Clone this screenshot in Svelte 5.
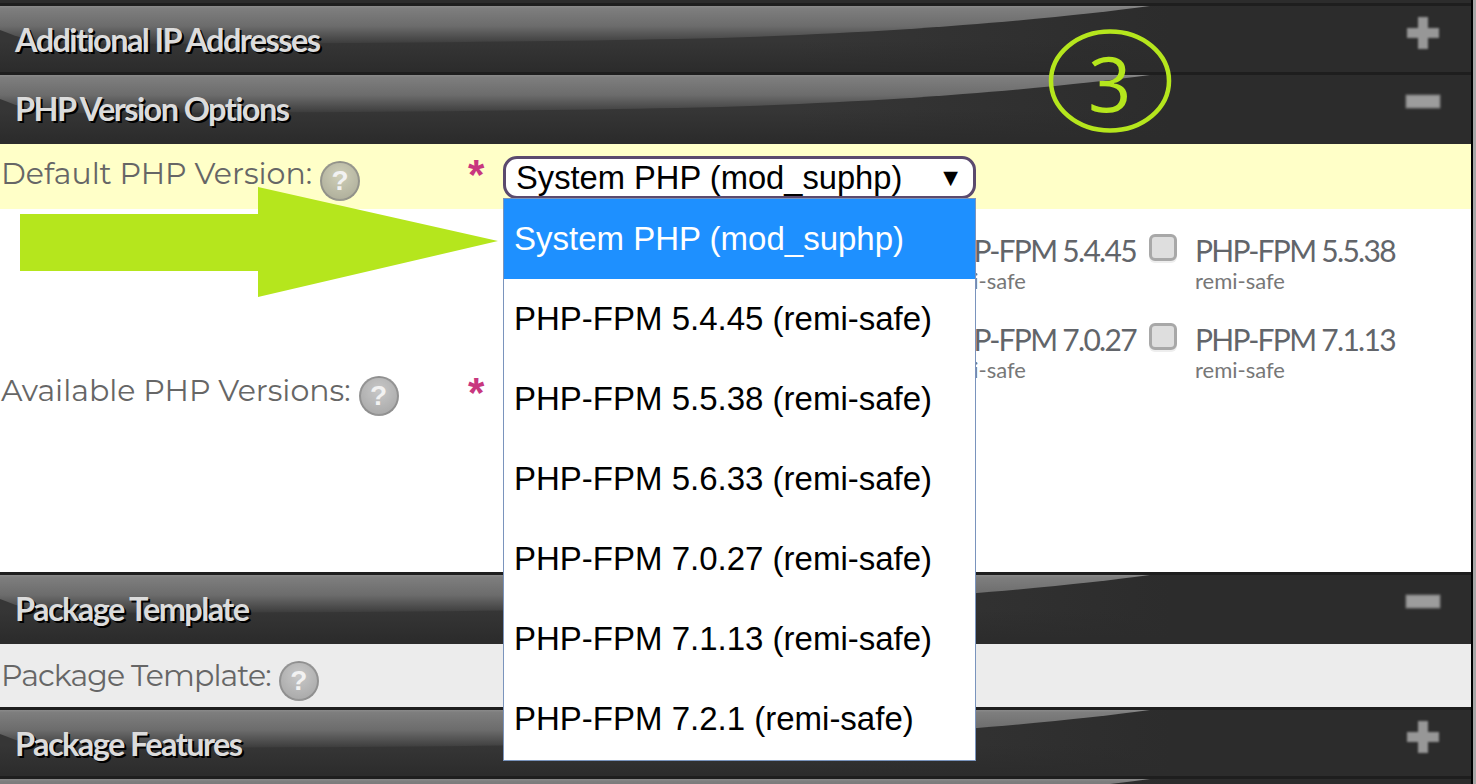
<script>
  const options = [
    "System PHP (mod_suphp)",
    "PHP-FPM 5.4.45 (remi-safe)",
    "PHP-FPM 5.5.38 (remi-safe)",
    "PHP-FPM 5.6.33 (remi-safe)",
    "PHP-FPM 7.0.27 (remi-safe)",
    "PHP-FPM 7.1.13 (remi-safe)",
    "PHP-FPM 7.2.1 (remi-safe)",
  ];
  // the rest of the checkboxes sit behind the open dropdown
  const versions = ["PHP-FPM 5.4.45", "PHP-FPM 5.5.38", "PHP-FPM 7.0.27", "PHP-FPM 7.1.13"];
</script>

{#snippet help()}
  <span class="help">?</span>
{/snippet}

{#snippet bar(title, open)}
  <div class="bar" class:closed={!open}>
    <span class="bar-title">{title}</span>
    <svg class="toggle" width="40" height="40" viewBox="0 0 40 40" aria-hidden="true">
      {#if open}
        <rect x="3" y="13" width="34" height="13" fill="#9c9c9c" stroke="#777" stroke-width="1" />
      {:else}
        <path d="M15 4h10v11h11v10H25v11H15V25H4V15h11z" fill="#979797" />
      {/if}
    </svg>
  </div>
{/snippet}

<div class="page">
  <main class="content">
    <div class="stub"></div>
    {@render bar("Additional IP Addresses", false)}
    {@render bar("PHP Version Options", true)}

    <section class="panel">
      <div class="row row-default">
        <div class="label"><span>Default PHP Version:</span> {@render help()}</div>
        <span class="req">*</span>
        <div class="select-wrap">
          <div class="select">
            <span>System PHP (mod_suphp)</span>
            <span class="caret">▼</span>
          </div>
          <ul class="dropdown">
            {#each options as opt, i}
              <li class:active={i === 0}>{opt}</li>
            {/each}
          </ul>
        </div>
      </div>
      <div class="row row-versions">
        <div class="label"><span>Available PHP Versions:</span> {@render help()}</div>
        <span class="req">*</span>
        <div class="versions">
          {#each versions as v}
            <div class="version">
              <span class="check"></span>
              <div>
                <div class="v-name">{v}</div>
                <div class="v-sub">remi-safe</div>
              </div>
            </div>
          {/each}
        </div>
      </div>
    </section>

    {@render bar("Package Template", true)}
    <section class="panel">
      <div class="row row-template">
        <div class="label"><span>Package Template:</span> {@render help()}</div>
      </div>
    </section>

    {@render bar("Package Features", false)}
    <div class="bar"></div>

    <svg class="annot-arrow" width="500" height="120" viewBox="0 0 500 120" aria-hidden="true">
      <path d="M0 27H238V0L478 54L238 110V84H0z" fill="#b5e61d" />
    </svg>
    <svg class="annot-circle" width="126" height="108" viewBox="0 0 126 108" aria-hidden="true">
      <ellipse cx="63" cy="54" rx="59" ry="49.5" fill="none" stroke="#b5e61d" stroke-width="4.5" />
    </svg>
    <span class="annot-num">3</span>
  </main>
  <div class="edge"></div>
  <div class="scrollbar"></div>
</div>

<style>
  :global(body) {
    margin: 0;
    overflow: hidden;
    background: #fff;
  }

  .page {
    display: flex;
    height: 784px;
    overflow: hidden;
  }

  .content {
    position: relative;
    width: 1471px;
    flex: none;
  }

  .edge {
    width: 2px;
    background: #000;
  }

  .scrollbar {
    flex: 1;
    background: #a6a6a6;
  }

  .stub {
    height: 3px;
    background: #2c2c2c;
    border-bottom: 3px solid #1e1e1e;
  }

  .bar {
    position: relative;
    box-sizing: border-box;
    height: 69px;
    background:
      linear-gradient(rgba(44, 44, 44, 0) 35px, #2c2c2c 64px),
      linear-gradient(90deg, #363636 800px, #2c2c2c 1170px);
    overflow: hidden;
    display: flex;
    align-items: flex-start;
    justify-content: space-between;
    padding: 0 28px 0 15px;
  }

  .bar.closed {
    border-bottom: 3px solid #1e1e1e;
  }

  .bar::before {
    content: "";
    position: absolute;
    left: 0;
    top: 0;
    width: 1170px;
    height: 40px;
    background: linear-gradient(#8a8a8a 0, #7e7e7e 6%, #6c6c6c 50%, #3a3a3a 96%);
    clip-path: path("M0 0H1150C1060 12 900 28 677 33C520 36 320 38 50 38C25 34 10 28 0 24Z");
    filter: blur(0.5px);
  }

  .bar-title {
    position: relative;
    font-family: Lato, sans-serif;
    font-weight: 700;
    font-size: 32.5px;
    line-height: 38px;
    letter-spacing: -1.6px;
    color: #dcdcdc;
    text-shadow: 2px 2px 0 #000;
    margin-top: 15px;
  }

  .toggle {
    position: relative;
    filter: blur(0.8px);
    margin-top: 7px;
  }

  .panel {
    border-bottom: 3px solid #1e1e1e;
  }

  .row {
    display: flex;
    box-sizing: border-box;
  }

  .row-default {
    height: 65px;
    background: #ffffc8;
    padding-top: 12px;
  }

  .row-versions {
    height: 363px;
    background: #fff;
    align-items: center;
  }

  .row-template {
    height: 63px;
    background: #ececec;
    align-items: center;
  }

  .label {
    flex: none;
    width: 468px;
    box-sizing: border-box;
    padding-left: 1px;
    font-family: Montserrat, "Maven Pro", Inter, sans-serif;
    font-size: 30px;
    line-height: 36px;
    color: #666;
    white-space: nowrap;
    display: flex;
    align-items: flex-start;
    gap: 8px;
  }

  .row-versions .label,
  .row-template .label {
    margin-top: 7px;
  }

  .row-versions .label .help,
  .row-template .label .help {
    margin-top: 3px;
  }

  .row-template .label {
    width: auto;
    letter-spacing: -0.9px;
  }

  .help {
    display: inline-flex;
    align-items: center;
    justify-content: center;
    width: 40px;
    height: 40px;
    margin-top: 5px;
    border-radius: 50%;
    box-sizing: border-box;
    border: 2px solid rgba(120, 120, 120, 0.55);
    background: radial-gradient(circle at 50% 35%, #c8c8c8, #a4a4a4);
    color: #f2f2f2;
    font-family: "Liberation Sans", sans-serif;
    font-weight: 700;
    font-size: 28px;
    letter-spacing: 0;
  }

  .row-default .help {
    background: radial-gradient(circle at 50% 35%, #cfcfb8, #a9a996);
  }

  .req {
    flex: none;
    width: 35px;
    color: #c8377f;
    font-family: "Liberation Sans", sans-serif;
    font-weight: 700;
    font-size: 42px;
    line-height: 42px;
    height: 42px;
    margin-top: -2px;
  }

  .row-versions .req {
    margin-top: 4px;
  }

  .select-wrap {
    position: relative;
    width: 473px;
  }

  .select {
    box-sizing: border-box;
    height: 43px;
    border: 3px solid #5b4a6e;
    border-radius: 14px;
    background: #fff;
    color: #000;
    font-family: "Liberation Sans", sans-serif;
    font-size: 32.7px;
    display: flex;
    align-items: center;
    justify-content: space-between;
    padding: 0 10px 0 10px;
  }

  .caret {
    font-size: 25px;
  }

  .dropdown {
    position: absolute;
    z-index: 2;
    top: 42px;
    left: 0;
    right: 0;
    box-sizing: border-box;
    margin: 0;
    padding: 0 0 1px;
    list-style: none;
    background: #fff;
    border: 1px solid #7a94bd;
    font-family: "Liberation Sans", sans-serif;
    font-size: 33px;
    color: #000;
  }

  .dropdown li {
    height: 80px;
    line-height: 80px;
    padding-left: 10px;
    white-space: nowrap;
  }

  .dropdown li.active {
    background: #1e90ff;
    color: #fff;
  }

  .versions {
    display: grid;
    grid-template-columns: repeat(2, 259px);
    grid-auto-rows: 89px;
    margin-left: 387px;
    align-self: flex-start;
    padding-top: 25px;
  }

  .version {
    display: flex;
    gap: 18px;
  }

  .check {
    flex: none;
    box-sizing: border-box;
    width: 28px;
    height: 27px;
    border: 3px solid #a8a8a8;
    border-radius: 6px;
    background: #dedede;
    box-shadow: 0 2px 0 #eee;
  }

  .v-name {
    font-family: Lato, sans-serif;
    font-size: 30px;
    line-height: 32px;
    letter-spacing: -1.7px;
    color: #62656a;
    white-space: nowrap;
  }

  .v-sub {
    font-family: Lato, sans-serif;
    font-size: 22px;
    line-height: 26px;
    margin-top: 2px;
    color: #777;
  }

  .annot-arrow {
    position: absolute;
    left: 20px;
    top: 187px;
    z-index: 3;
  }

  .annot-circle {
    position: absolute;
    left: 1047px;
    top: 27px;
  }

  .annot-num {
    position: absolute;
    left: 1088px;
    top: 38px;
    font-family: "Open Sans", sans-serif;
    font-weight: 400;
    font-size: 76px;
    line-height: 90px;
    color: #b5e61d;
  }
</style>
